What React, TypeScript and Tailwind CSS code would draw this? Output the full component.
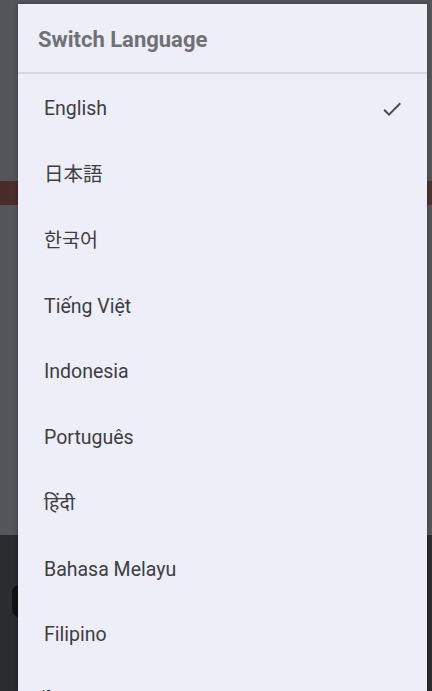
import { useState } from 'react';

const languages = [
  'English',
  '日本語',
  '한국어',
  'Tiếng Việt',
  'Indonesia',
  'Português',
  'हिंदी',
  'Bahasa Melayu',
  'Filipino',
  'ไทย',
];

function CheckIcon() {
  return (
    <svg width="24" height="24" viewBox="0 0 24 24" className="text-[#4b4b51]">
      <path fill="currentColor" d="M9 16.17L4.83 12l-1.42 1.41L9 19 21 7l-1.41-1.41z" />
    </svg>
  );
}

export default function App() {
  const [selected, setSelected] = useState('English');

  return (
    <div
      className="relative w-[432px] h-[691px] overflow-hidden"
      style={{ fontFamily: 'Roboto, "Noto Sans", "Noto Sans CJK KR", "Noto Sans CJK JP", sans-serif' }}
    >
      {/* Dimmed page behind the dialog */}
      <div className="flex flex-col h-full">
        <div className="h-[181px] bg-[#54555a]" />
        <div className="h-[24px] bg-gradient-to-r from-[#4a2c2a] via-[#5a2f2b] to-[#4e3432]" />
        <div className="h-[330px] bg-[#55565b]" />
        <div className="flex-1 bg-[#2b2c2f] flex flex-col">
          <div className="h-[50px]" />
          <div className="ml-[12px] w-[7px] h-[32px] rounded-l-full bg-[#111214]" />
        </div>
      </div>

      {/* Dialog */}
      <div className="absolute left-[18px] right-[5px] top-[4px] bottom-0 bg-[#eeeef8] shadow-[0_0_4px_rgba(0,0,0,0.35)] flex flex-col overflow-hidden">
        <div className="h-[70px] shrink-0 flex items-center px-[20px] border-b-2 border-[#d6d6e0]">
          <span className="text-[22px] font-bold text-[#707077] pt-[2px]">Switch Language</span>
        </div>
        <div className="flex flex-col pt-[2px]">
          {languages.map((lang) => (
            <button
              key={lang}
              onClick={() => setSelected(lang)}
              className="h-[65.75px] shrink-0 flex items-center justify-between pl-[26px] pr-[23px] text-left"
            >
              <span className="text-[19.5px] text-[#3d3d43]">{lang}</span>
              {selected === lang && <CheckIcon />}
            </button>
          ))}
        </div>
      </div>
    </div>
  );
}
